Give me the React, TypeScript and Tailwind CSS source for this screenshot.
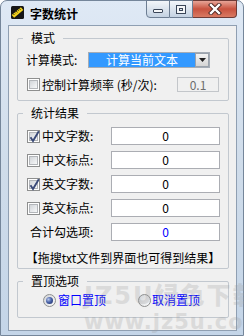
import React from "react";

function Check({ checked }: { checked?: boolean }) {
  return (
    <span className="w-[13px] h-[13px] shrink-0 border border-[#8e8f8f] bg-white p-px flex">
      <span className="relative flex-1 border border-[#b3b6ba] bg-gradient-to-br from-[#d2d5d9] to-[#f7f8f9]">
        {checked && (
          <svg className="absolute left-[-1px] top-[-3px]" width="11" height="13" viewBox="0 0 11 13">
            <path d="M1.5 7.2 L4 11 L9.8 1.2" fill="none" stroke="#3a4a78" strokeWidth="1.9" />
          </svg>
        )}
      </span>
    </span>
  );
}

function Radio({ checked }: { checked?: boolean }) {
  return (
    <span className="w-[13px] h-[13px] shrink-0 rounded-full border border-[#8e8f8f] bg-gradient-to-br from-[#d0d3d7] to-[#fbfbfb] flex items-center justify-center">
      {checked && (
        <span className="w-[7px] h-[7px] rounded-full bg-[radial-gradient(circle_at_35%_35%,#b8c8ec_0%,#4a63a8_45%,#14245e_100%)]" />
      )}
    </span>
  );
}

function Group({ title, className, children }: { title: string; className: string; children: React.ReactNode }) {
  return (
    <div className={"relative border border-[#c2c8cf] rounded-[2px] shrink-0 " + className}>
      <span className="absolute left-[5px] top-[-8px] h-[14px] px-[8px] bg-[#f0f0f0] leading-[14px]">{title}</span>
      {children}
    </div>
  );
}

function Row({ label, checked, value, blue }: { label: string; checked?: boolean; value: string; blue?: boolean }) {
  return (
    <div className="h-[18px] flex items-center">
      {checked === undefined ? (
        <span className="pl-[12px]">{label}</span>
      ) : (
        <>
          <span className="ml-[9px]">
            <Check checked={checked} />
          </span>
          <span className="ml-[2px]">{label}</span>
        </>
      )}
      <div
        className={
          "ml-auto mr-[8px] w-[109px] h-[18px] border border-[#abadb3] bg-white flex items-center justify-center leading-[14px] " +
          (blue ? "text-[#0000ff]" : "text-black")
        }
      >
        {value}
      </div>
    </div>
  );
}

export default function App() {
  return (
    <div className="relative w-[244px] h-[336px] overflow-hidden bg-white font-['Noto_Sans_CJK_SC','Noto_Sans',sans-serif] text-[12px] leading-[14px] text-black">
      <div className="w-[244px] h-[336px] flex flex-col rounded-t-[7px] border border-[#75869a] bg-gradient-to-b from-[#dfe9f5] via-[#cfdcea] to-[#c4d5e8]">
        {/* title bar */}
        <div className="h-[24px] shrink-0 flex items-start">
          <svg className="ml-[10px] mt-[5px] shrink-0" width="13" height="13" viewBox="0 0 13 13">
            <rect x="0" y="0" width="13" height="13" rx="1.5" fill="#161616" />
            <g transform="rotate(-40 6.5 6.5)">
              <rect x="0.5" y="4.6" width="12" height="3.8" fill="#f2d21b" />
              <path d="M2.5 4.6v1.8M4.5 4.6v1.3M6.5 4.6v1.8M8.5 4.6v1.3M10.5 4.6v1.8" stroke="#161616" strokeWidth="0.8" />
            </g>
          </svg>
          <span className="ml-[6px] mt-[6px] font-bold leading-[14px]">字数统计</span>
          <div className="ml-auto mr-[6px] -mt-px flex h-[18px]">
            <div className="w-[24px] h-[18px] border border-[#6d7e93] rounded-bl-[4px] bg-gradient-to-b from-[#f2f6fa] via-[#dbe4ee] to-[#c4d2e2] flex items-center justify-center">
              <span className="mt-[4px] w-[10px] h-[4px] border border-[#3a4658] bg-[#f4f6f8] rounded-[1px]" />
            </div>
            <div className="w-[23px] h-[18px] border-y border-r border-[#6d7e93] bg-gradient-to-b from-[#f2f6fa] via-[#dbe4ee] to-[#c4d2e2] flex items-center justify-center">
              <span className="w-[10px] h-[9px] border border-[#3a4658] bg-[#f4f6f8] p-[2px] flex">
                <span className="flex-1 border border-[#3a4658] bg-[#dbe4ee]" />
              </span>
            </div>
            <div className="w-[44px] h-[18px] border-y border-r border-[#6e3b36] rounded-br-[4px] bg-gradient-to-b from-[#e6a497] via-[#c8523f] to-[#d97a63] flex items-center justify-center">
              <svg width="14" height="12" viewBox="0 0 14 12">
                <path d="M3 2 L11 10 M11 2 L3 10" stroke="#4a2420" strokeWidth="4.2" strokeLinecap="square" />
                <path d="M3 2 L11 10 M11 2 L3 10" stroke="#ffffff" strokeWidth="2.4" strokeLinecap="square" />
              </svg>
            </div>
          </div>
        </div>

        {/* client area */}
        <div className="flex-1 ml-[7px] mr-[6px] mb-[4px] border border-[#8f9fb2] bg-[#f0f0f0] flex flex-col pl-[8px] pt-[12px]">
          <Group title="模式" className="w-[212px] h-[63px]">
            <div className="mt-[13px] h-[16px] flex items-center">
              <span className="pl-[8px] w-[70px]">计算模式:</span>
              <div className="w-[122px] h-[16px] border border-[#a5acb5] bg-white flex">
                <div className="flex-1 bg-[#3399ff] text-white flex items-center justify-center leading-[14px]">计算当前文本</div>
                <div className="w-[14px] border border-[#9aa2ac] bg-gradient-to-b from-[#f3f3f3] to-[#d4d4d4] flex items-center justify-center">
                  <svg width="7" height="4" viewBox="0 0 7 4">
                    <path d="M0 0 H7 L3.5 4 Z" fill="#202020" />
                  </svg>
                </div>
              </div>
            </div>
            <div className="mt-[9px] h-[15px] flex items-center">
              <span className="ml-[9px]">
                <Check />
              </span>
              <span className="ml-[2px]">控制计算频率 (秒/次):</span>
              <div className="ml-auto mr-[9px] w-[42px] h-[15px] border border-[#c3c6ca] bg-[#f0f0f0] text-[#6d6d6d] flex items-center justify-center leading-[13px]">
                0.1
              </div>
            </div>
          </Group>

          <Group title="统计结果" className="mt-[12px] w-[212px] h-[156px]">
            <div className="mt-[13px] flex flex-col gap-[6px]">
              <Row label="中文字数:" checked value="0" />
              <Row label="中文标点:" checked={false} value="0" />
              <Row label="英文字数:" checked value="0" />
              <Row label="英文标点:" checked={false} value="0" />
              <Row label="合计勾选项:" value="0" blue />
            </div>
            <div className="mt-[10px] h-[14px] text-center whitespace-nowrap">【拖搜txt文件到界面也可得到结果】</div>
          </Group>

          <Group title="置顶选项" className="mt-[12px] w-[212px] h-[37px]">
            <div className="mt-[11px] h-[14px] flex items-center pl-[25px]">
              <div className="w-[95px] flex items-center">
                <Radio checked />
                <span className="ml-[2px] text-[#0000ff]">窗口置顶</span>
              </div>
              <div className="flex items-center">
                <Radio />
                <span className="ml-px text-[#0000ff]">取消置顶</span>
              </div>
            </div>
          </Group>
        </div>
      </div>

      {/* watermark overlay */}
      <div className="pointer-events-none absolute left-[84px] top-[282px] flex flex-col items-start whitespace-nowrap opacity-25">
        <span className="text-[24px] leading-[28px] font-black tracking-[2px] text-[#9a9a9a] font-['DejaVu_Sans','Noto_Sans_CJK_SC',sans-serif]">JZ5U绿色下载</span>
        <span className="text-[21px] leading-[24px] font-black tracking-[1px] text-[#9a9a9a] font-['DejaVu_Sans',sans-serif]">www.jz5u.com</span>
      </div>
    </div>
  );
}
